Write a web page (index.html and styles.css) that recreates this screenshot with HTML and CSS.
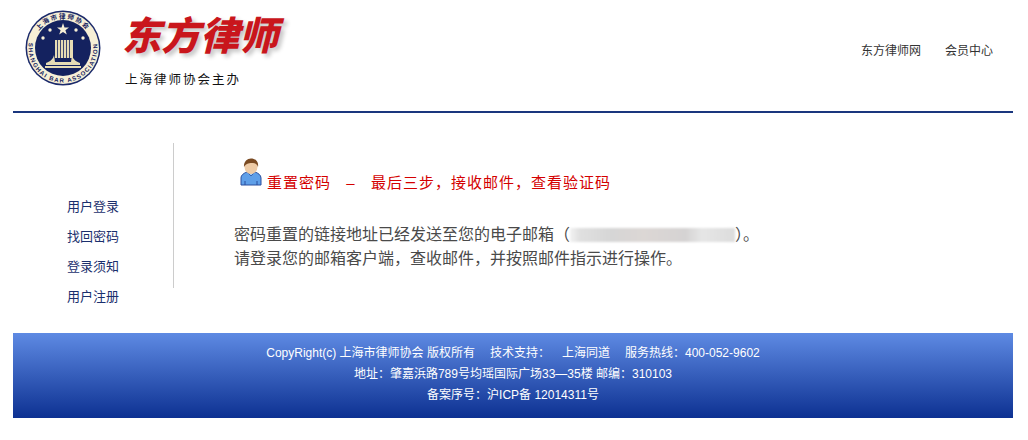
FILE: index.html
```html
<!DOCTYPE html>
<html lang="zh">
<head>
<meta charset="utf-8">
<title>重置密码</title>
<link rel="stylesheet" href="styles.css">
</head>
<body>
<div class="wrap">
  <header class="header">
    <div class="brand">
      <svg class="seal" width="76" height="76" viewBox="0 0 76 76">
        <defs>
          <path id="arcTop" d="M8.500 38a29.500 29.500 0 0 1 59 0"/>
          <path id="arcBottom" d="M6.700 23.500A34.500 34.500 0 1 0 69.300 23.500"/>
        </defs>
        <circle cx="38" cy="38" r="37.500" fill="#1b2a6b"/>
        <circle cx="38" cy="38" r="36" fill="#f6efd6"/>
        <circle cx="38" cy="38" r="28" fill="#14225f"/>
        <text class="seal-cn"><textPath href="#arcTop" startOffset="50%" text-anchor="middle">上海市律师协会</textPath></text>
        <text class="seal-en"><textPath href="#arcBottom" startOffset="50%" text-anchor="middle">SHANGHAI BAR ASSOCIATION</textPath></text>
        <polygon points="38,13 39.500,17.500 44,17.500 40.400,20.200 41.800,24.500 38,21.900 34.200,24.500 35.600,20.200 32,17.500 36.500,17.500" fill="#f6efd6"/>
        <circle cx="25" cy="20" r="1.700" fill="#f6efd6"/>
        <circle cx="51" cy="20" r="1.700" fill="#f6efd6"/>
        <circle cx="18" cy="28" r="1.700" fill="#f6efd6"/>
        <circle cx="58" cy="28" r="1.700" fill="#f6efd6"/>
        <path d="M30 30h18v18H30z" fill="#e6dcb4"/>
        <path d="M32.500 30v19M35.500 30v19M38.500 30v19M41.500 30v19M44.500 30v19" stroke="#14225f" stroke-width=".8"/>
        <path d="M29 45c-1 4-3 6-8 8v2h34v-2c-5-2-7-4-8-8l-1 7H30z" fill="#e6dcb4"/>
        <path d="M20 56h36v2H20z" fill="#e6dcb4"/>
      </svg>
      <div class="brand-text">
        <div class="brand-name">东方律师</div>
        <div class="brand-sub">上海律师协会主办</div>
      </div>
    </div>
    <nav class="topnav">
      <a>东方律师网</a>
      <a>会员中心</a>
    </nav>
  </header>
  <main class="main">
    <aside class="side">
      <a>用户登录</a>
      <a>找回密码</a>
      <a>登录须知</a>
      <a>用户注册</a>
    </aside>
    <section class="content">
      <h1 class="title">
        <svg class="person" width="22" height="28" viewBox="0 0 22 28">
          <path d="M1 27v-7c0-3 3-5 6-6h8c3 1 6 3 6 6v7z" fill="#5f9fe8" stroke="#2b4f9e"/>
          <path d="M7 14l4 4 4-4" fill="#9cc8f2" stroke="#2b4f9e" stroke-width=".8"/>
          <path d="M5 23v4M17 23v4" stroke="#2b4f9e"/>
          <ellipse cx="11" cy="9" rx="6.500" ry="7" fill="#eecba6"/>
          <path d="M4 9c-.5-5 3-8.500 7-8.500s8 2.500 7 8.500c-1-3-3-4-5-4-3 0-7 0-9 4z" fill="#7a4a22"/>
        </svg>
        <span class="title-text">重置密码</span><span class="title-text dash">–</span><span class="title-text">最后三步，接收邮件，查看验证码</span>
      </h1>
      <p class="msg">密码重置的链接地址已经发送至您的电子邮箱（<span class="blur"></span>）。<br>请登录您的邮箱客户端，查收邮件，并按照邮件指示进行操作。</p>
    </section>
  </main>
  <footer class="footer">
    <div>CopyRight(c) 上海市律师协会 版权所有<span class="gap"></span>技术支持：<span class="gap-mid"></span>上海同道<span class="gap"></span>服务热线：400-052-9602</div>
    <div>地址：肇嘉浜路789号均瑶国际广场33—35楼 邮编：310103</div>
    <div>备案序号：沪ICP备 12014311号</div>
  </footer>
</div>
</body>
</html>
```

FILE: styles.css
```css
* { box-sizing: border-box; }
html, body { margin: 0; padding: 0; background: #fff; }
body {
  font-family: "Liberation Sans", "Noto Sans CJK SC", sans-serif;
  font-size: 12px;
  color: #333;
}
.wrap { width: 1000px; margin-left: 13px; }

.header {
  height: 113px;
  border-bottom: 2px solid #1a367e;
  display: flex;
  justify-content: space-between;
  align-items: flex-start;
}
.brand { display: flex; padding: 10px 0 0 12px; }
.seal { display: block; flex: none; }
.seal-cn { font-size: 6.500px; font-weight: 700; fill: #14225f; letter-spacing: 1.500px; }
.seal-en { font-size: 6px; font-weight: 700; fill: #14225f; letter-spacing: 1.200px; }
.brand-text { margin-left: 24px; }
.brand-name {
  font-size: 39px;
  line-height: 50px;
  height: 50px;
  margin: 2px 0 0 -3px;
  width: 164px;
  font-weight: 900;
  font-style: italic;
  color: #c9161c;
  white-space: nowrap;
  text-shadow: 3px 3px 4px #c4c4c4;
}
.brand-sub {
  margin-top: 9px;
  font-size: 12.500px;
  line-height: 18px;
  letter-spacing: 2px;
  color: #111;
}
.topnav { display: flex; gap: 24px; padding: 42px 20px 0 0; line-height: 18px; }

.main { display: flex; height: 220px; padding-top: 30px; }
.side {
  width: 161px;
  height: 145px;
  flex: none;
  border-right: 1px solid #ccc;
  padding: 49px 0 0 54px;
  font-size: 13px;
  line-height: 30px;
  color: #1a2f6d;
}
.side a { display: block; white-space: nowrap; }
.content { padding-left: 60px; }
.title {
  display: flex;
  align-items: flex-start;
  margin: 15px 0 0 6px;
  height: 28px;
  font-size: 15px;
  font-weight: 400;
  letter-spacing: 1px;
  line-height: 22px;
  color: #d40000;
}
.title-text { margin-top: 14px; }
.person { display: block; flex: none; margin-right: 5px; }
.dash { width: 40px; text-align: center; }
.msg {
  margin: 37px 0 0;
  font-size: 16px;
  line-height: 24px;
  color: #4a4a4a;
  white-space: nowrap;
}
.blur {
  display: inline-block;
  width: 165px;
  height: 14px;
  vertical-align: -2px;
  filter: blur(1px);
  background: linear-gradient(90deg, #f2f2f2 0, #e0e0e0 6%, #d6d6d6 25%, #dcd7d5 45%, #d5d3d3 70%, #e6e6e6 80%, #dcdcdc 100%);
}

.footer {
  height: 85px;
  padding-top: 10px;
  text-align: center;
  line-height: 21px;
  color: #fff;
  background: linear-gradient(#5e8ae3, #0d3192);
}
.gap { display: inline-block; width: 15px; }
.gap-mid { display: inline-block; width: 12px; }
```
